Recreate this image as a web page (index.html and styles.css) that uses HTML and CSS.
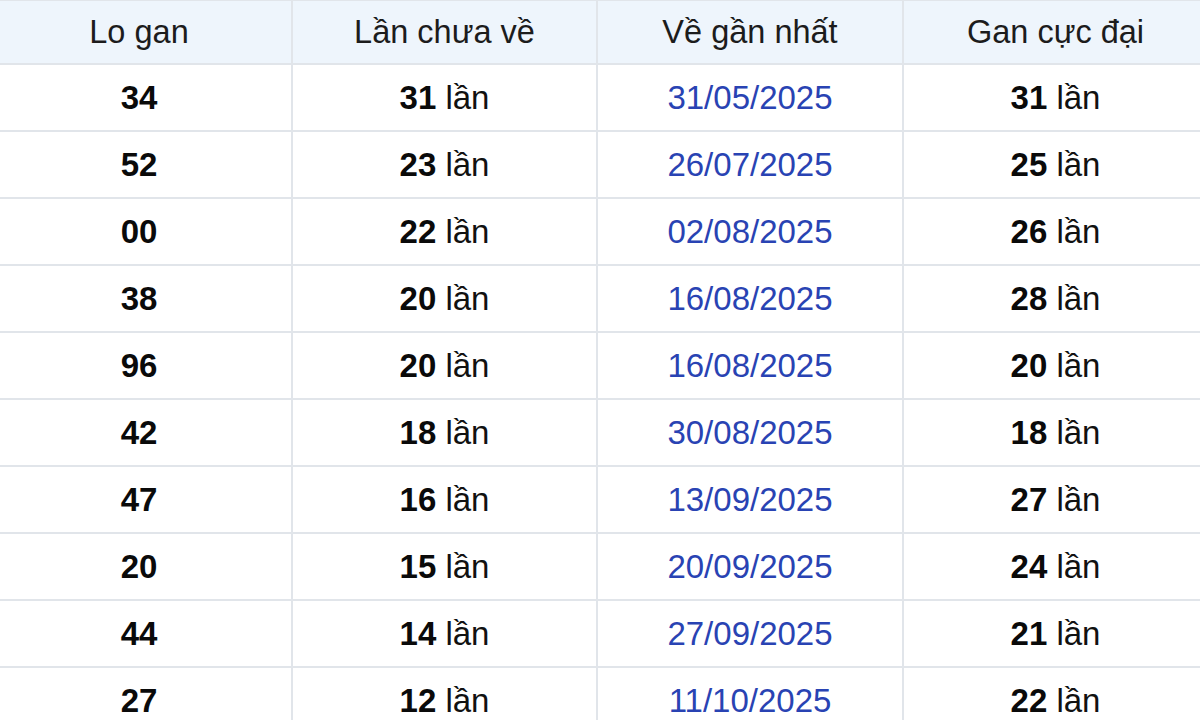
FILE: index.html
```html
<!DOCTYPE html>
<html lang="vi">
<head>
<meta charset="utf-8">
<title>Lo gan</title>
<link rel="stylesheet" href="styles.css">
</head>
<body>
<div class="wrap">
<table class="gan">
<colgroup><col class="c1"><col class="c2"><col class="c3"><col class="c4"></colgroup>
<thead>
<tr><th>Lo gan</th><th>Lần chưa về</th><th>Về gần nhất</th><th>Gan cực đại</th></tr>
</thead>
<tbody>
<tr><td><b>34</b></td><td><b>31</b> lần</td><td class="date">31/05/2025</td><td><b>31</b> lần</td></tr>
<tr><td><b>52</b></td><td><b>23</b> lần</td><td class="date">26/07/2025</td><td><b>25</b> lần</td></tr>
<tr><td><b>00</b></td><td><b>22</b> lần</td><td class="date">02/08/2025</td><td><b>26</b> lần</td></tr>
<tr><td><b>38</b></td><td><b>20</b> lần</td><td class="date">16/08/2025</td><td><b>28</b> lần</td></tr>
<tr><td><b>96</b></td><td><b>20</b> lần</td><td class="date">16/08/2025</td><td><b>20</b> lần</td></tr>
<tr><td><b>42</b></td><td><b>18</b> lần</td><td class="date">30/08/2025</td><td><b>18</b> lần</td></tr>
<tr><td><b>47</b></td><td><b>16</b> lần</td><td class="date">13/09/2025</td><td><b>27</b> lần</td></tr>
<tr><td><b>20</b></td><td><b>15</b> lần</td><td class="date">20/09/2025</td><td><b>24</b> lần</td></tr>
<tr><td><b>44</b></td><td><b>14</b> lần</td><td class="date">27/09/2025</td><td><b>21</b> lần</td></tr>
<tr><td><b>27</b></td><td><b>12</b> lần</td><td class="date">11/10/2025</td><td><b>22</b> lần</td></tr>
</tbody>
</table>
</div>
</body>
</html>
```

FILE: styles.css
```css
html, body {
  margin: 0;
  padding: 0;
  background: #ffffff;
  overflow: hidden;
}
.wrap {
  width: 1200px;
  height: 720px;
  overflow: hidden;
}
.gan {
  margin-left: -15px;
  margin-top: -1px;
  width: 1222px;
  border-collapse: collapse;
  table-layout: fixed;
  font-family: "Liberation Sans", Arial, sans-serif;
  font-size: 33px;
  color: #111111;
}
.gan .c1 { width: 306px; }
.gan .c2 { width: 305px; }
.gan .c3 { width: 306px; }
.gan .c4 { width: 305px; }
.gan th, .gan td {
  border: 2px solid #e1e5ea;
  text-align: center;
  padding: 0;
}
.gan th {
  height: 62px;
  font-size: 32.5px;
  font-weight: normal;
  background: #eef5fc;
  color: #1c1c1c;
}
.gan td {
  height: 65px;
}
.gan b {
  font-weight: bold;
  color: #0a0a0a;
}
.gan .date {
  color: #2943b3;
}
```
